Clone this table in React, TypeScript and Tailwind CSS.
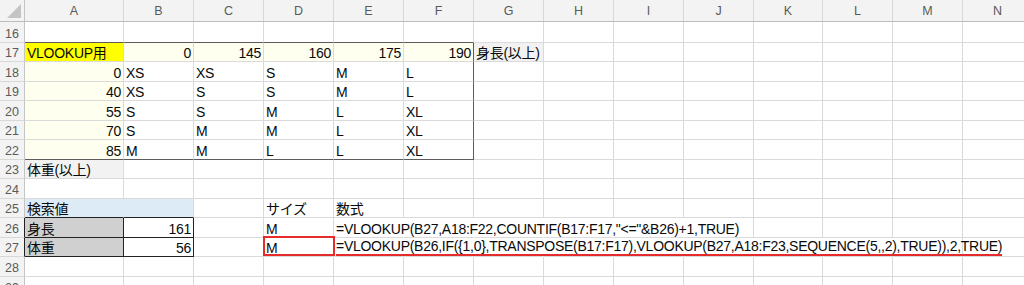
import React from "react";

type BK = "g" | "d" | "k" | "n" | "h";
const RB: Record<BK, string> = {
  g: "border-r border-r-[#dadada]",
  d: "border-r border-r-[#5c5c5c]",
  k: "border-r border-r-[#222222]",
  n: "border-r border-r-transparent",
  h: "border-r border-r-[#c4c4c4]",
};
const BB: Record<BK, string> = {
  g: "border-b border-b-[#dadada]",
  d: "border-b border-b-[#5c5c5c]",
  k: "border-b border-b-[#222222]",
  n: "border-b border-b-transparent",
  h: "border-b border-b-[#c4c4c4]",
};

type CellSpec = {
  t?: string;
  right?: boolean;
  bg?: string;
  r?: BK;
  b?: BK;
  red?: boolean;
  ul?: boolean;
};

const COLS = "grid grid-cols-[25px_99px_70px_70px_70px_70px_70px_70px_70px_70px_70px_69px_70px_70px_70px]";
const FONT = "font-['Liberation_Sans','Noto_Sans_CJK_JP',sans-serif]";

function Cell({ c }: { c: CellSpec }) {
  const r = RB[c.r ?? "g"];
  const b = BB[c.b ?? "g"];
  return (
    <div
      className={`relative flex items-end whitespace-nowrap overflow-visible text-[14px] leading-[16px] tracking-[-0.27px] text-[#0a0a0a] ${r} ${b} ${
        c.right ? "justify-end pr-[2px]" : "justify-start pl-[2px]"
      } ${c.bg ?? ""}`}
    >
      {c.ul ? (
        <span className="relative z-10 shrink-0 whitespace-nowrap border-b-2 border-b-[#e52b2b]">{c.t}</span>
      ) : (
        <span className="relative z-10 shrink-0 whitespace-nowrap">{c.t}</span>
      )}
      {c.red && (
        <div className="absolute left-[-1px] top-[-2px] right-[-2px] bottom-[0px] border-2 border-[#e52b2b]" />
      )}
    </div>
  );
}

const LETTERS = ["A", "B", "C", "D", "E", "F", "G", "H", "I", "J", "K", "L", "M", "N"];
const LY = "bg-[#fffff0]";

function row(n: number, cells: CellSpec[], h: string, hdrR: BK = "h") {
  return { n, cells, h, hdrR };
}

function fill(cells: CellSpec[]): CellSpec[] {
  const out = [...cells];
  while (out.length < 14) out.push({});
  return out;
}

const rows = [
  row(16, fill([{ b: "d" }, { b: "d" }, { b: "d" }, { b: "d" }, { b: "d" }, { b: "d" }]), "h-[21px]"),
  row(
    17,
    fill([
      { t: "VLOOKUP用", bg: "bg-[#ffff00]" },
      { t: "0", right: true, bg: LY },
      { t: "145", right: true, bg: LY },
      { t: "160", right: true, bg: LY },
      { t: "175", right: true, bg: LY },
      { t: "190", right: true, bg: LY, r: "d" },
      { t: "身長(以上)", bg: "bg-[#f2f2f2]" },
    ]),
    "h-[19px]"
  ),
  row(18, fill([{ t: "0", right: true, bg: LY }, { t: "XS" }, { t: "XS" }, { t: "S" }, { t: "M" }, { t: "L", r: "d" }]), "h-[20px]"),
  row(19, fill([{ t: "40", right: true, bg: LY }, { t: "XS" }, { t: "S" }, { t: "S" }, { t: "M" }, { t: "L", r: "d" }]), "h-[19px]"),
  row(20, fill([{ t: "55", right: true, bg: LY }, { t: "S" }, { t: "S" }, { t: "M" }, { t: "L" }, { t: "XL", r: "d" }]), "h-[20px]"),
  row(21, fill([{ t: "70", right: true, bg: LY }, { t: "S" }, { t: "M" }, { t: "M" }, { t: "L" }, { t: "XL", r: "d" }]), "h-[19px]"),
  row(
    22,
    fill([
      { t: "85", right: true, bg: LY, b: "d" },
      { t: "M", b: "d" },
      { t: "M", b: "d" },
      { t: "L", b: "d" },
      { t: "L", b: "d" },
      { t: "XL", r: "d", b: "d" },
    ]),
    "h-[20px]"
  ),
  row(23, fill([{ t: "体重(以上)", bg: "bg-[#f2f2f2]" }]), "h-[19px]"),
  row(24, fill([]), "h-[20px]"),
  row(
    25,
    fill([
      { t: "検索値", bg: "bg-[#ddebf7]", b: "k", r: "n" },
      { bg: "bg-[#ddebf7]", b: "k" },
      {},
      { t: "サイズ" },
      { t: "数式" },
    ]),
    "h-[19px]"
  ),
  row(
    26,
    fill([
      { t: "身長", bg: "bg-[#d0d0d0]", r: "k", b: "k" },
      { t: "161", right: true, r: "k", b: "k" },
      {},
      { t: "M" },
      { t: "=VLOOKUP(B27,A18:F22,COUNTIF(B17:F17,\"<=\"&B26)+1,TRUE)", r: "n" },
      { r: "n" },
      { r: "n" },
      { r: "n" },
      { r: "n" },
    ]),
    "h-[20px]",
    "k"
  ),
  row(
    27,
    fill([
      { t: "体重", bg: "bg-[#d0d0d0]", r: "k", b: "k" },
      { t: "56", right: true, r: "k", b: "k" },
      {},
      { t: "M", red: true },
      {
        t: "=VLOOKUP(B26,IF({1,0},TRANSPOSE(B17:F17),VLOOKUP(B27,A18:F23,SEQUENCE(5,,2),TRUE)),2,TRUE)",
        r: "n",
        ul: true,
      },
      { r: "n" },
      { r: "n" },
      { r: "n" },
      { r: "n" },
      { r: "n" },
      { r: "n" },
      { r: "n" },
    ]),
    "h-[19px]",
    "k"
  ),
  row(28, fill([]), "h-[20px]"),
  row(29, fill([]), "h-[20px]"),
];

export default function App() {
  return (
    <div className={`w-[1024px] h-[285px] overflow-hidden bg-white ${FONT}`}>
      <div className="w-[1033px]">
        <div className={`${COLS} h-[22px] bg-[#f3f3f3] border-b border-b-[#bcbcbc]`}>
          <div className="relative border-r border-r-[#c4c4c4]">
            <svg width="14" height="14" viewBox="0 0 14 14" className="absolute right-[3px] bottom-[3px]">
              <polygon points="14,0 14,14 0,14" fill="#c4c4c4" />
            </svg>
          </div>
          {LETTERS.map((l) => (
            <div
              key={l}
              className="flex items-center justify-center pt-[1px] text-[12.5px] text-[#5a5a5a] border-r border-r-[#d8d8d8]"
            >
              {l}
            </div>
          ))}
        </div>
        {rows.map((rw) => (
          <div key={rw.n} className={`${COLS} ${rw.h}`}>
            <div
              className={`flex items-end justify-center bg-[#f3f3f3] text-[12.5px] leading-[16px] text-[#5a5a5a] ${
                RB[rw.hdrR]
              } border-b border-b-[#d8d8d8]`}
            >
              {rw.n}
            </div>
            {rw.cells.map((c, i) => (
              <Cell key={i} c={c} />
            ))}
          </div>
        ))}
      </div>
    </div>
  );
}
